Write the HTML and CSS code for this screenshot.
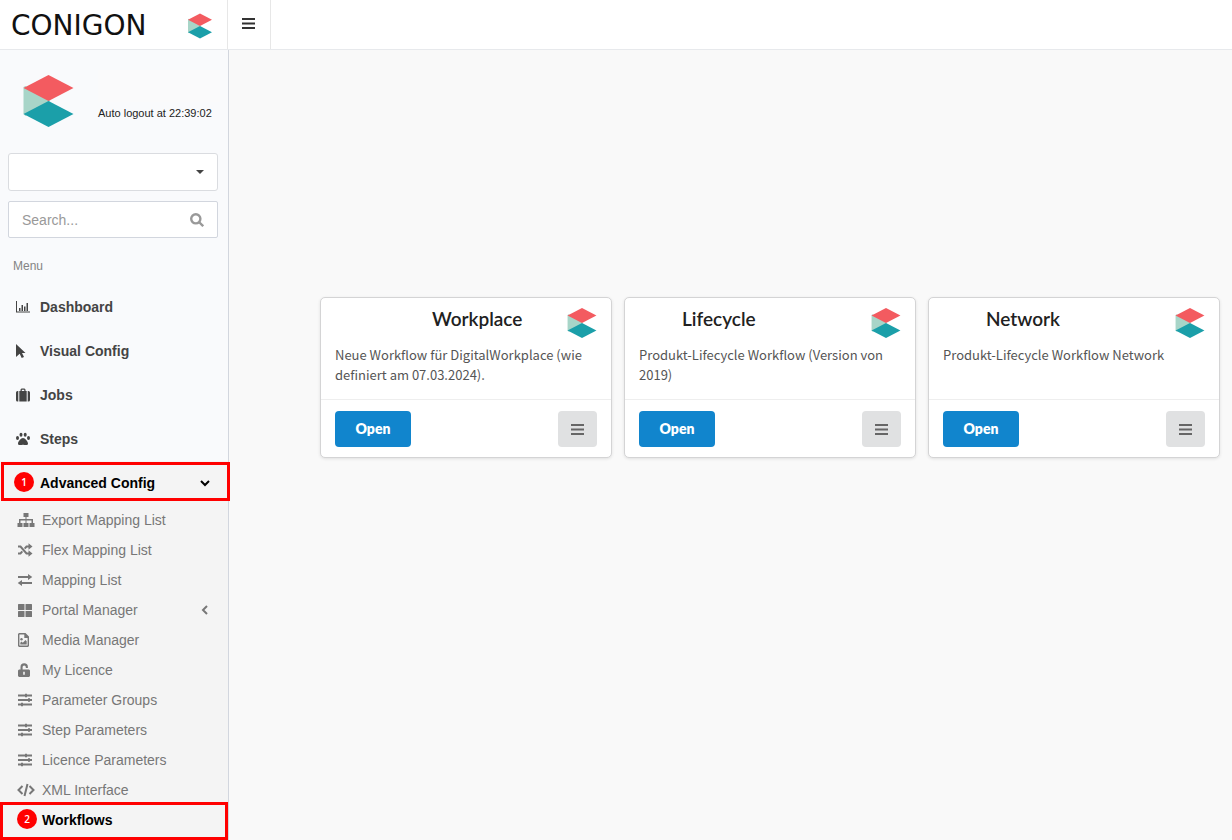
FILE: index.html
```html
<!DOCTYPE html>
<html lang="en">
<head>
    <meta charset="UTF-8">
    <meta name="viewport" content="width=device-width, initial-scale=1.0">
    <title>Conigon - Workflows</title>
    <link rel="stylesheet" href="styles.css">
</head>
<body>
    <!-- Shared shapes -->
    <svg class="sprite" aria-hidden="true">
        <symbol id="cube" viewBox="0 0 50 52">
            <path fill="#a8d5c8" d="M0 12l2-1 25 15L2 41l-2-2z"/>
            <path fill="#f35b60" d="M25 0l25 13-25 13L0 13z"/>
            <path fill="#1b9fa9" d="M25 26l25 13-25 13L0 39z"/>
        </symbol>
        <symbol id="bars" viewBox="0 0 14 14">
            <path d="M0 2h13v2H0zM0 6.500h13v2H0zM0 11h13v2H0z"/>
        </symbol>
        <symbol id="sliders" viewBox="0 0 16 14">
            <path d="M1 1.500h14v2H1zM1 6h14v2H1zM1 10.500h14v2H1zM8 .8h2v3.400H8zM11 5.300h2v3.400h-2zM4 9.800h2v3.400H4z"/>
        </symbol>
    </svg>

    <header class="topbar">
        <a class="brand" href="#">
            <span class="brand-name">CONIGON</span>
            <svg class="brand-cube"><use href="#cube"/></svg>
        </a>
        <button class="toggle" type="button" aria-label="Toggle menu">
            <svg class="bars"><use href="#bars"/></svg>
        </button>
    </header>

    <div class="layout">
        <aside class="sidebar">
            <div class="user">
                <svg class="user-cube"><use href="#cube"/></svg>
                <div class="user-info">
                    <div class="user-name"></div>
                    <p>Auto logout at 22:39:02</p>
                </div>
            </div>

            <div class="filters">
                <div class="select-box">
                    <select aria-label="Client">
                        <option></option>
                    </select>
                    <svg class="caret" viewBox="0 0 8 4"><path d="M0 0h8L4 4z"/></svg>
                </div>
                <div class="search-box">
                    <input type="text" placeholder="Search..." aria-label="Search">
                    <svg class="search-icon" viewBox="0 0 14 14"><circle cx="5.800" cy="5.800" r="4.600"/><path d="M9 9l4.200 4.200"/></svg>
                </div>
            </div>

            <h2 class="menu-title">Menu</h2>

            <nav>
                <ul class="menu">
                    <li><a href="#">
                        <svg viewBox="0 0 16 14"><path d="M1 1h1v10.500h13v1H1zM4 8h1.500v3H4zM6.500 5H8v6H6.500zM9 6.500h1.500V11H9zM11.500 3H13v8h-1.500z"/></svg>
                        Dashboard</a></li>
                    <li><a href="#">
                        <svg viewBox="0 0 16 14"><path d="M1 0l9.500 9H7l2 4-2.300 1-2-4.300L1 13z"/></svg>
                        Visual Config</a></li>
                    <li><a href="#">
                        <svg viewBox="0 0 16 14"><path d="M1 4.500Q1 3 2.500 3H3.300v10.500h-.8Q1 13.500 1 12zM12.700 3h.8Q15 3 15 4.500V12q0 1.500-1.500 1.500h-.8zM4.300 13.500V3h1.200V1.500l1-1h3l1 1V3h1.200v10.500zM6.800 3h2.500V1.800H6.800z" fill-rule="evenodd"/></svg>
                        Jobs</a></li>
                    <li><a href="#">
                        <svg viewBox="0 0 16 14"><ellipse cx="2.500" cy="6" rx="1.500" ry="1.900"/><ellipse cx="6" cy="2.700" rx="1.500" ry="2"/><ellipse cx="10.200" cy="2.700" rx="1.500" ry="2"/><ellipse cx="13.500" cy="6" rx="1.500" ry="1.900"/><path d="M8 6c2 0 5 3.600 5 5.500 0 2.500-3 1.200-5 1.200s-5 1.300-5-1.200C3 9.600 6 6 8 6z"/></svg>
                        Steps</a></li>
                    <li class="open">
                        <a class="current" href="#">
                            <span class="badge">1</span>
                            Advanced Config
                            <svg class="chevron" viewBox="0 0 10 10"><path d="M1 3l4 4 4-4"/></svg>
                        </a>
                        <ul class="submenu">
                            <li><a href="#">
                                <svg class="wide" viewBox="0 0 18 14"><path d="M6.500 0h5v4h-2v2H16v4h1.500v4h-5v-4h2V7.500h-5V10h2v4h-5v-4h2V7.500h-5V10h2v4h-5v-4H2V6h6.500V4h-2z"/></svg>
                                Export Mapping List</a></li>
                            <li><a href="#">
                                <svg viewBox="0 0 16 14"><g class="line"><path d="M1 3.500h2.500l6 7H12M1 10.500h2.500L5.300 8.400M7.700 5.600l1.800-2.100H12"/></g><path d="M11.500.3l4 3.200-4 3.200zM11.500 7.300l4 3.200-4 3.200z"/></svg>
                                Flex Mapping List</a></li>
                            <li><a href="#">
                                <svg viewBox="0 0 16 14"><path d="M1 3h10V1l4.300 3L11 7V5H1zM15 9H5V7L.7 10 5 13v-2h10z"/></svg>
                                Mapping List</a></li>
                            <li><a href="#">
                                <svg viewBox="0 0 16 14"><rect x="1" y="1" width="6.500" height="6" rx=".5"/><rect x="8.500" y="1" width="6.500" height="6" rx=".5"/><rect x="1" y="8" width="6.500" height="6" rx=".5"/><rect x="8.500" y="8" width="6.500" height="6" rx=".5"/></svg>
                                Portal Manager
                                <svg class="chevron" viewBox="0 0 10 10"><path d="M7 1L3 5l4 4"/></svg>
                            </a></li>
                            <li><a href="#">
                                <svg viewBox="0 0 16 14"><path fill-rule="evenodd" d="M2 0h6.500L12 3.500V13l-1 1H2l-1-1V1zM2.400 1.400v11.200h8.200V5H7.300V1.400z"/><circle cx="4.500" cy="6.300" r="1.200"/><path d="M3.300 11.500V9.700l1.200-1.200 1.300 1.200 2.700-2.700 1.200 1.200v3.300z"/></svg>
                                Media Manager</a></li>
                            <li><a href="#">
                                <svg viewBox="0 0 16 14"><path fill-rule="evenodd" d="M3.500 6.500V4a3.700 3.700 0 0 1 7.400 0v1H8.800V4a1.600 1.600 0 0 0-3.200 0v2.500H12l1 1V13l-1 1H2l-1-1V7.500l1-1zM6.200 8.800v3h1.600v-3z"/></svg>
                                My Licence</a></li>
                            <li><a href="#">
                                <svg><use href="#sliders"/></svg>
                                Parameter Groups</a></li>
                            <li><a href="#">
                                <svg><use href="#sliders"/></svg>
                                Step Parameters</a></li>
                            <li><a href="#">
                                <svg><use href="#sliders"/></svg>
                                Licence Parameters</a></li>
                            <li><a href="#">
                                <svg class="wide" viewBox="0 0 18 14"><g class="line"><path d="M5.500 3L1.500 7l4 4M12.500 3l4 4-4 4M10.500 1l-3 12"/></g></svg>
                                XML Interface</a></li>
                            <li><a class="current" href="#">
                                <span class="badge">2</span>
                                Workflows</a></li>
                        </ul>
                    </li>
                </ul>
            </nav>
        </aside>

        <main class="content">
            <article class="card">
                <div class="card-body">
                    <svg class="card-cube"><use href="#cube"/></svg>
                    <h3 class="indent-wide">Workplace</h3>
                    <p>Neue Workflow für DigitalWorkplace (wie definiert am 07.03.2024).</p>
                </div>
                <div class="card-footer">
                    <button class="btn-open" type="button">Open</button>
                    <button class="btn-more" type="button" aria-label="More"><svg class="bars"><use href="#bars"/></svg></button>
                </div>
            </article>

            <article class="card">
                <div class="card-body">
                    <svg class="card-cube"><use href="#cube"/></svg>
                    <h3>Lifecycle</h3>
                    <p>Produkt-Lifecycle Workflow (Version von 2019)</p>
                </div>
                <div class="card-footer">
                    <button class="btn-open" type="button">Open</button>
                    <button class="btn-more" type="button" aria-label="More"><svg class="bars"><use href="#bars"/></svg></button>
                </div>
            </article>

            <article class="card">
                <div class="card-body">
                    <svg class="card-cube"><use href="#cube"/></svg>
                    <h3>Network</h3>
                    <p>Produkt-Lifecycle Workflow Network</p>
                </div>
                <div class="card-footer">
                    <button class="btn-open" type="button">Open</button>
                    <button class="btn-more" type="button" aria-label="More"><svg class="bars"><use href="#bars"/></svg></button>
                </div>
            </article>
        </main>
    </div>
</body>
</html>
```
FILE: styles.css
```css
*,
*::after {
    box-sizing: border-box;
}
body {
    display: flex;
    flex-direction: column;
    min-height: 100vh;
    margin: 0;
    background-color: #f9f9f9;
    font-family: "Liberation Sans", Arial, sans-serif;
    font-size: 14px;
    color: #444;
}
ul {
    list-style: none;
    margin: 0;
    padding: 0;
}
a {
    color: inherit;
    text-decoration: none;
}
svg {
    fill: currentColor;
    flex-shrink: 0;
}
button {
    border: none;
    cursor: pointer;
}
.sprite {
    display: none;
}
.bars {
    width: 14px;
    height: 14px;
}

/* Top bar */
.topbar {
    display: flex;
    height: 50px;
    background-color: #fff;
    border-bottom: 1px solid #e7e9ec;
}
.brand {
    display: flex;
    align-items: center;
    justify-content: space-between;
    width: 228px;
    padding: 3px 15px 0 11px;
    border-right: 1px solid #e7e7e7;
    color: #111;
}
.brand-name {
    font-family: "DejaVu Sans", sans-serif;
    font-size: 28px;
    line-height: 28px;
}
.brand-cube {
    width: 24px;
    height: 26px;
}
.toggle {
    width: 43px;
    padding: 0;
    background-color: #fff;
    border-right: 1px solid #e7e7e7;
    color: #333;
}

/* Sidebar */
.layout {
    display: flex;
    flex: 1;
}
.sidebar {
    width: 229px;
    flex-shrink: 0;
    background-color: #f9fafc;
    border-right: 1px solid #d2d6de;
}
.user {
    display: flex;
    gap: 24px;
    padding: 20px 8px 0 23px;
}
.user-cube {
    width: 51px;
    height: 52px;
    margin-top: 5px;
}
.user-info {
    flex: 1;
}
.user-name {
    height: 32px;
    background-color: #fafafb;
}
.user p {
    margin: 4px 0 0;
    font-size: 11px;
    line-height: 14px;
    color: #222;
    white-space: nowrap;
}
.filters {
    display: grid;
    gap: 10px;
    padding: 26px 10px 0 8px;
}
.select-box,
.search-box {
    display: grid;
    grid-template-columns: 1fr 32px;
    align-items: center;
}
.select-box select,
.search-box input {
    grid-area: 1 / 1 / 2 / 3;
    width: 100%;
    height: 38px;
    padding: 0 13px;
    appearance: none;
    background-color: #fff;
    border: 1px solid #dadce0;
    border-radius: 3px;
    font-family: inherit;
    font-size: 14px;
    color: #444;
}
.search-box input {
    height: 37px;
    border-color: #d2d6de;
    border-radius: 2px;
}
.search-box input::placeholder {
    color: #999;
}
.caret,
.search-icon {
    grid-area: 1 / 2;
    pointer-events: none;
}
.caret {
    width: 8px;
    height: 4px;
    margin-left: 10px;
}
.search-icon {
    width: 14px;
    height: 14px;
    margin-left: 4px;
    fill: none;
    stroke: #999;
    stroke-width: 2.400;
}
.menu-title {
    margin: 0;
    padding: 21px 13px 11px;
    font-size: 12px;
    font-weight: normal;
    line-height: 15px;
    color: #848484;
}

/* Menu */
.menu a {
    display: flex;
    align-items: center;
    gap: 9px;
    height: 44px;
    padding: 0 18px 0 15px;
    font-weight: bold;
}
.menu svg {
    width: 16px;
    height: 14px;
}
.menu .chevron {
    width: 10px;
    height: 10px;
    margin-left: auto;
    fill: none;
    stroke: currentColor;
    stroke-width: 2;
}
.line {
    fill: none;
    stroke: currentColor;
    stroke-width: 2;
}
.menu .open {
    background-color: #f4f4f4;
}
.submenu {
    padding-bottom: 5px;
}
.menu .submenu a {
    height: 30px;
    padding-left: 17px;
    font-weight: normal;
    color: #777;
}
.menu .wide {
    width: 18px;
    margin-right: -2px;
}
.menu .current,
.menu .submenu .current {
    position: relative;
    font-weight: bold;
    color: #000;
}
.menu .current {
    gap: 6px;
    padding-left: 14px;
}
.menu .submenu .current {
    gap: 5px;
}

/* Red frame drawn around the active entries */
.current::after {
    content: "";
    position: absolute;
    top: 1px;
    left: 1px;
    right: -2px;
    height: 39px;
    border: 3px solid #f00;
}
.submenu .current::after {
    top: -3px;
    left: 0;
    right: 0;
    height: 38px;
}
.badge {
    width: 20px;
    height: 20px;
    margin-bottom: 2px;
    border-radius: 50%;
    background-color: #f00;
    font-family: "Open Sans", sans-serif;
    font-size: 10px;
    font-weight: 600;
    line-height: 20px;
    text-align: center;
    color: #fff;
}

/* Workflow cards */
.content {
    flex: 1;
    display: grid;
    grid-template-columns: repeat(3, 1fr);
    gap: 12px;
    align-items: start;
    padding: 247px 12px 0 91px;
}
.card {
    background-color: #fff;
    border: 1px solid #d4d4d5;
    border-radius: 5px;
    box-shadow: 0 1px 3px #e0e0e0;
}
.card-body {
    min-height: 101px;
    padding: 10px 14px;
}
.card-cube {
    float: right;
    width: 30px;
    height: 30px;
}
.card h3 {
    margin: 0;
    padding-left: 43px;
    font-family: Lato, sans-serif;
    font-size: 19px;
    font-weight: 600;
    line-height: 22px;
    color: #212121;
}
.card .indent-wide {
    padding-left: 97px;
}
.card p {
    margin: 15px 0 0;
    font-family: "Noto Sans CJK SC", sans-serif;
    font-size: 13px;
    line-height: 20px;
    color: #555;
}
.card-footer {
    display: flex;
    justify-content: space-between;
    padding: 11px 14px 10px;
    border-top: 1px solid #eee;
}
.btn-open,
.btn-more {
    height: 36px;
    border-radius: 4px;
}
.btn-open {
    width: 76px;
    padding: 0 0 2px;
    background-color: #1185cd;
    font-family: Lato, sans-serif;
    font-size: 14px;
    font-weight: 800;
    color: #fff;
}
.btn-more {
    display: flex;
    align-items: center;
    justify-content: center;
    width: 39px;
    background-color: #e0e1e2;
    color: #666;
}
```
